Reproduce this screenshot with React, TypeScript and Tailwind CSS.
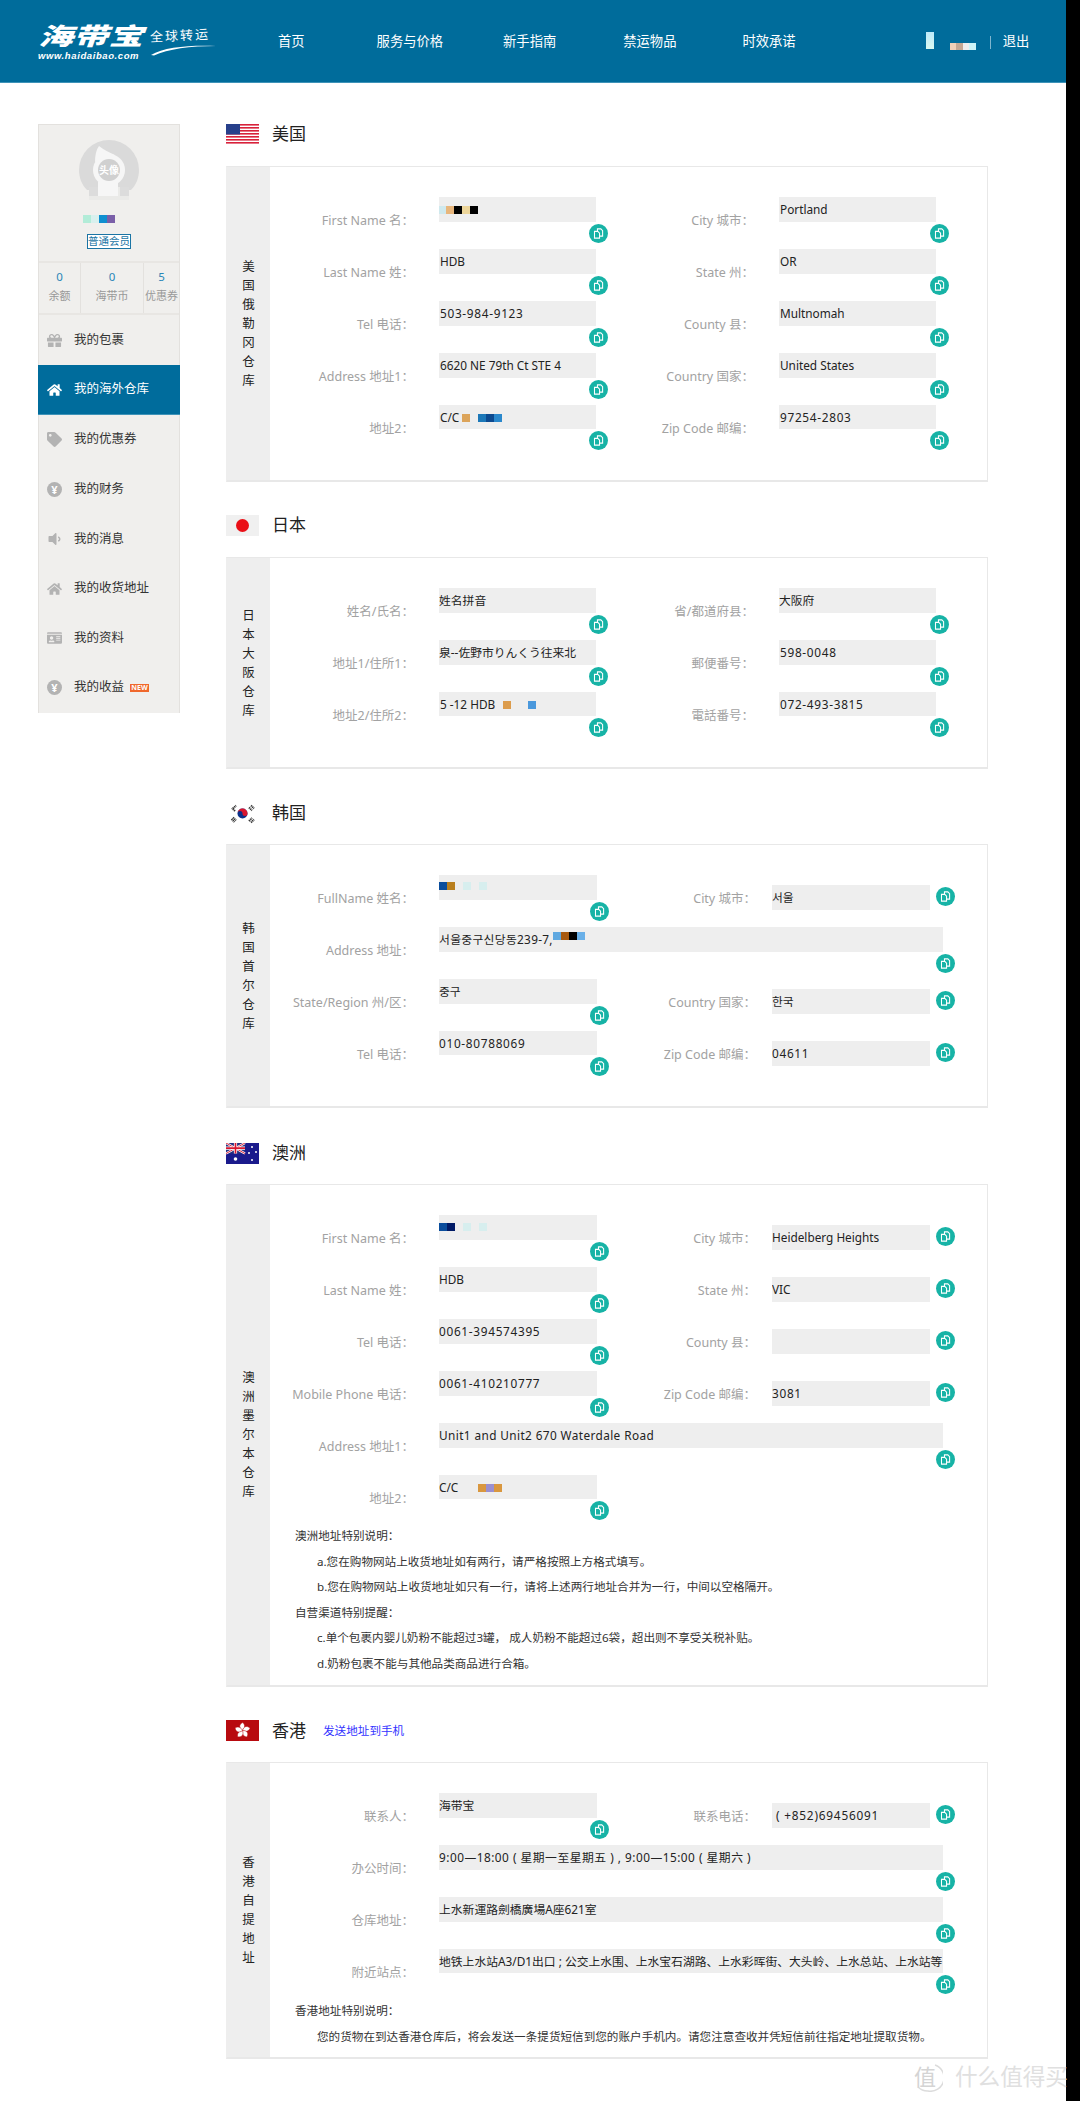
import React from "react";
import { FaGift, FaHome, FaTag, FaVolumeDown, FaIdCard } from "react-icons/fa";

const FONT = '"Noto Sans","Noto Sans CJK SC","Noto Sans CJK KR",sans-serif';

function CopyIcon() {
  return (
    <svg viewBox="0 0 18 18" className="w-[19px] h-[19px] block shrink-0">
      <circle cx="9" cy="9" r="9" fill="#17b3a6" />
      <path d="M8 4.6h3.2l1.7 1.7v5.2H8z" fill="none" stroke="#fff" strokeWidth="1" />
      <path d="M5.2 7h3.1l1.7 1.7v4.7H5.2z" fill="#17b3a6" stroke="#fff" strokeWidth="1" />
    </svg>
  );
}

function Mosaic({ colors, size = 8, className = "" }: { colors: string[]; size?: number; className?: string }) {
  return (
    <span className={"inline-flex shrink-0 " + className}>
      {colors.map((c, i) => (
        <span key={i} className="block" style={{ width: size, height: size, background: c }} />
      ))}
    </span>
  );
}

function Num({ children, ml = 0 }: { children: React.ReactNode; ml?: number }) {
  return (
    <span className="tracking-[.7px]" style={{ marginLeft: ml }}>
      {children}
    </span>
  );
}

type F = {
  label: string;
  value?: React.ReactNode;
  inline?: boolean;
  wide?: boolean;
};

function Field({ f, labelW, gap, inputW, colW }: { f: F; labelW: number; gap: number; inputW: number; colW: number }) {
  return (
    <div className="flex shrink-0">
      <div
        className="shrink-0 text-right text-[12.5px] leading-[18px] pt-[15px] text-[#a2a2a2] whitespace-nowrap"
        style={{ width: labelW + 6 }}
      >
        {f.label}
      </div>
      {f.inline ? (
        <div className="flex items-start" style={{ marginLeft: gap - 6 }}>
          <div
            className="mt-[10px] h-[25px] pt-[1px] bg-[#eeeeee] flex items-center text-[11.8px] text-[#222] whitespace-nowrap overflow-hidden"
            style={{ width: inputW }}
          >
            {f.value}
          </div>
          <div className="mt-[12px] ml-[6px]">
            <CopyIcon />
          </div>
        </div>
      ) : (
        <div className="flex flex-col items-end" style={{ marginLeft: gap - 6, width: colW }}>
          <div
            className="self-start h-[25px] pt-[1px] bg-[#eeeeee] flex items-center text-[11.8px] text-[#222] whitespace-nowrap overflow-hidden"
            style={{ width: inputW }}
          >
            {f.value}
          </div>
          <div className="mt-[2px]">
            <CopyIcon />
          </div>
        </div>
      )}
    </div>
  );
}

function Rows({ rows, variant }: { rows: F[][]; variant: "a" | "b" }) {
  return (
    <div className="flex flex-col">
      {rows.map((r, i) => (
        <div key={i} className={"flex " + (i === rows.length - 1 ? "h-[45px]" : "h-[52px]")}>
          {r.length === 1 && r[0].wide ? (
            <Field f={r[0]} labelW={138} gap={31} inputW={504} colW={516} />
          ) : (
            <>
              <Field f={r[0]} labelW={138} gap={31} inputW={variant === "a" ? 157 : 158} colW={variant === "a" ? 169 : 170} />
              {r[1] &&
                (variant === "a" ? (
                  <Field f={r[1]} labelW={140} gap={31} inputW={157} colW={170} />
                ) : (
                  <Field f={{ ...r[1], inline: true }} labelW={141} gap={22} inputW={158} colW={180} />
                ))}
            </>
          )}
        </div>
      ))}
    </div>
  );
}

function Side({ text }: { text: string }) {
  return (
    <div className="w-[43px] shrink-0 bg-[#eeeeee] flex flex-col items-center justify-center text-[12.5px] leading-[19px] text-[#222]">
      {text.split("").map((c, i) => (
        <span key={i} className="block">
          {c}
        </span>
      ))}
    </div>
  );
}

function Title({ flag, name, extra, mb = 21 }: { flag: React.ReactNode; name: string; extra?: React.ReactNode; mb?: number }) {
  return (
    <div className="flex items-center h-[20px]" style={{ marginBottom: mb }}>
      <div className="w-[33px] h-[21px] shrink-0">{flag}</div>
      <div className="ml-[13px] text-[17px] leading-[20px] text-[#222]">{name}</div>
      {extra}
    </div>
  );
}

function Panel({ side, children, pb = 30 }: { side: string; children: React.ReactNode; pb?: number }) {
  return (
    <div className="flex border border-[#e8e8e8] border-b-2 border-l-[#eeeeee]">
      <Side text={side} />
      <div className="flex-1 pt-[30px]" style={{ paddingBottom: pb }}>
        {children}
      </div>
    </div>
  );
}

function Notes({ items, mt }: { items: { t: string; sub?: boolean }[]; mt: number }) {
  return (
    <div className="text-[11.6px] leading-[25.6px] text-[#333] whitespace-nowrap" style={{ marginTop: mt }}>
      {items.map((n, i) => (
        <div key={i} className={n.sub ? "ml-[47px]" : "ml-[25px]"}>
          {n.t}
        </div>
      ))}
    </div>
  );
}

const FlagUS = (
  <svg viewBox="0 0 33 21" className="w-[33px] h-[21px] block">
    <rect width="33" height="21" fill="#fff" />
    {[0, 3, 6, 9, 12, 15, 18].map((y) => (
      <rect key={y} y={y} width="33" height="1.6" fill="#d8213a" />
    ))}
    <rect width="14" height="10.5" fill="#27408b" />
  </svg>
);
const FlagJP = (
  <div className="w-[33px] h-[21px] bg-[#f0f0f0] flex items-center justify-center">
    <div className="w-[13px] h-[13px] rounded-full bg-[#ea0f16]" />
  </div>
);
const FlagKR = (
  <svg viewBox="0 0 33 21" className="w-[33px] h-[21px] block">
    <rect width="33" height="21" fill="#fff" />
    <circle cx="16.5" cy="10.5" r="5" fill="#0a2f8a" />
    <path d="M11.5 10.5a5 5 0 0 1 10 0a2.5 2.5 0 0 1-5 0a2.5 2.5 0 0 0-5 0z" fill="#d8152f" />
    <g stroke="#333" strokeWidth="2" strokeDasharray="1.2 .6">
      <path d="M7 5.5l3-3M9 8l-3-3" />
      <path d="M23 2.5l3 3M25 0.5l3 3" transform="translate(0 2)" />
      <path d="M7 15.5l3 3M5.5 17l3 3" transform="translate(0 -1)" />
      <path d="M23 18.5l3-3M25 20l3-3" transform="translate(0 -.5)" />
    </g>
  </svg>
);
const FlagAU = (
  <svg viewBox="0 0 33 21" className="w-[33px] h-[21px] block">
    <rect width="33" height="21" fill="#1a1a8c" />
    <rect width="19" height="10.5" fill="#27307f" />
    <path d="M0 0l19 10.5M19 0L0 10.5" stroke="#fff" strokeWidth="2.2" />
    <path d="M0 0l19 10.5M19 0L0 10.5" stroke="#d8152f" strokeWidth=".9" />
    <path d="M9.5 0v10.5M0 5.2h19" stroke="#fff" strokeWidth="3.2" />
    <path d="M9.5 0v10.5M0 5.2h19" stroke="#d8152f" strokeWidth="1.7" />
    <circle cx="9.5" cy="16" r="1.8" fill="#fff" />
    <circle cx="26" cy="4" r="1" fill="#fff" />
    <circle cx="30" cy="9" r="1" fill="#fff" />
    <circle cx="23" cy="10" r="1" fill="#fff" />
    <circle cx="26" cy="17" r="1" fill="#fff" />
  </svg>
);
const FlagHK = (
  <svg viewBox="0 0 33 21" className="w-[33px] h-[21px] block">
    <rect width="33" height="21" fill="#b80a0f" />
    <g fill="#fff" stroke="#b80a0f" strokeWidth=".5">
      {[0, 72, 144, 216, 288].map((a) => (
        <path key={a} transform={`rotate(${a} 16.5 10.5)`} d="M16.5 10.5C12.6 8 13 4.2 16.8 2.6C19.4 5 19 8.4 16.5 10.5z" />
      ))}
    </g>
  </svg>
);

function Pix({ children }: { children: React.ReactNode }) {
  return <span className="flex items-center w-full h-full">{children}</span>;
}

const usRows: F[][] = [
  [
    { label: "First Name 名：", value: <Mosaic colors={["#cfe9ee", "#e8b67c", "#000", "#ecd59a", "#000"]} className="-ml-[1px]" /> },
    { label: "City 城市：", value: <span className="ml-[1px]">Portland</span> },
  ],
  [
    { label: "Last Name 姓：", value: <span className="ml-[1px]">HDB</span> },
    { label: "State 州：", value: <span className="ml-[1px]">OR</span> },
  ],
  [
    { label: "Tel 电话：", value: <Num ml={1}>503-984-9123</Num> },
    { label: "County 县：", value: <span className="ml-[1px]">Multnomah</span> },
  ],
  [
    { label: "Address 地址1：", value: <span className="ml-[1px]">6620 NE 79th Ct STE 4</span> },
    { label: "Country 国家：", value: <span className="ml-[1px]">United States</span> },
  ],
  [
    {
      label: "地址2：",
      value: (
        <Pix>
          <span className="ml-[1px]">C/C</span>
          <Mosaic colors={["#dca45a"]} className="ml-[3px]" />
          <Mosaic colors={["#1c78b8", "#0c4a90", "#2a88cc"]} className="ml-[8px]" />
        </Pix>
      ),
    },
    { label: "Zip Code 邮编：", value: <Num ml={1}>97254-2803</Num> },
  ],
];

const jpRows: F[][] = [
  [
    { label: "姓名/氏名：", value: "姓名拼音" },
    { label: "省/都道府县：", value: "大阪府" },
  ],
  [
    { label: "地址1/住所1：", value: "泉--佐野市りんくう往来北" },
    { label: "郵便番号：", value: <Num ml={1}>598-0048</Num> },
  ],
  [
    {
      label: "地址2/住所2：",
      value: (
        <Pix>
          <span className="ml-[1px]">5 -12 HDB</span>
          <Mosaic colors={["#dc9c4c"]} className="ml-[8px]" />
          <Mosaic colors={["#4a98dc"]} className="ml-[17px]" />
        </Pix>
      ),
    },
    { label: "電話番号：", value: <Num ml={1}>072-493-3815</Num> },
  ],
];

const krRows: F[][] = [
  [
    {
      label: "FullName 姓名：",
      value: <Mosaic colors={["#0a4d9c", "#b97f1e", "transparent", "#d7eeee", "transparent", "#d7eeee"]} className="-translate-y-[2px]" />,
    },
    { label: "City 城市：", value: "서울" },
  ],
  [
    {
      label: "Address 地址：",
      wide: true,
      value: (
        <Pix>
          <span className="tracking-[.3px]">서울중구신당동239-7,</span>
          <Mosaic colors={["#5fa8e0", "#a85a10", "#000", "#6ab0e8"]} className="-translate-y-[4px]" />
        </Pix>
      ),
    },
  ],
  [
    { label: "State/Region 州/区：", value: "중구" },
    { label: "Country 国家：", value: "한국" },
  ],
  [
    { label: "Tel 电话：", value: <Num>010-80788069</Num> },
    { label: "Zip Code 邮编：", value: <Num>04611</Num> },
  ],
];

const auRows: F[][] = [
  [
    {
      label: "First Name 名：",
      value: <Mosaic colors={["#0a4d9c", "#001a66", "transparent", "#d7eeee", "transparent", "#d7eeee"]} className="-translate-y-[1px]" />,
    },
    { label: "City 城市：", value: "Heidelberg Heights" },
  ],
  [
    { label: "Last Name 姓：", value: "HDB" },
    { label: "State 州：", value: "VIC" },
  ],
  [
    { label: "Tel 电话：", value: <Num>0061-394574395</Num> },
    { label: "County 县：", value: "" },
  ],
  [
    { label: "Mobile Phone 电话：", value: <Num>0061-410210777</Num> },
    { label: "Zip Code 邮编：", value: <Num>3081</Num> },
  ],
  [{ label: "Address 地址1：", wide: true, value: <span className="tracking-[.4px]">Unit1 and Unit2 670 Waterdale Road</span> }],
  [
    {
      label: "地址2：",
      value: (
        <Pix>
          <span>C/C</span>
          <Mosaic colors={["#d9973f", "#9a8fd0", "#d9973f"]} className="ml-[20px]" />
        </Pix>
      ),
    },
  ],
];

const hkRows: F[][] = [
  [
    { label: "联系人：", value: "海带宝" },
    { label: "联系电话：", value: <span className="ml-[4px] tracking-[.8px]">( +852)69456091</span> },
  ],
  [{ label: "办公时间：", wide: true, value: <span className="tracking-[.5px]">9:00—18:00 ( 星期一至星期五 ) , 9:00—15:00 ( 星期六 )</span> }],
  [{ label: "仓库地址：", wide: true, value: "上水新運路劍橋廣場A座621室" }],
  [{ label: "附近站点：", wide: true, value: "地铁上水站A3/D1出口 ; 公交上水围、上水宝石湖路、上水彩晖街、大头岭、上水总站、上水站等" }],
];

function Yen() {
  return (
    <span className="w-[15px] h-[15px] rounded-full bg-[#b3b3b3] text-white text-[11px] leading-[15px] text-center font-bold block">
      ¥
    </span>
  );
}

const menu: { t: string; i: React.ReactNode; h: string; active?: boolean; isNew?: boolean }[] = [
  { t: "我的包裹", i: <FaGift size={15} />, h: "h-[50px]" },
  { t: "我的海外仓库", i: <FaHome size={16} />, h: "h-[50px]", active: true },
  { t: "我的优惠券", i: <FaTag size={15} />, h: "h-[49.6px]" },
  { t: "我的财务", i: <Yen />, h: "h-[49.6px]" },
  { t: "我的消息", i: <FaVolumeDown size={16} />, h: "h-[49.6px]" },
  { t: "我的收货地址", i: <FaHome size={16} />, h: "h-[49.6px]" },
  { t: "我的资料", i: <FaIdCard size={16} />, h: "h-[49.6px]" },
  { t: "我的收益", i: <Yen />, h: "h-[49.6px]", isNew: true },
];

function Sidebar() {
  return (
    <aside className="w-[142px] ml-[38px] mt-[41px] shrink-0 self-start bg-[#f0efed] border-x border-[#e3e1de] border-t">
      <div className="h-[138px] flex flex-col items-center border-b-2 border-[#e8e6e3]">
        <div className="relative w-[62px] h-[60px] mt-[15px]">
          <svg viewBox="0 0 62 60" className="w-[62px] h-[60px] block">
            <path d="M1 30a30 30 0 0 1 60 0c0 8-3 15-8 20H9C4 45 1 38 1 30z" fill="#dadada" />
            <circle cx="31" cy="30" r="16" fill="#f6f6f6" />
            <path d="M21 6C26 10 31 12 37 15L17 22C17 16 18 10 21 6z" fill="#f6f6f6" />
            <rect x="11" y="47" width="40" height="13" fill="#eaeae8" />
            <rect x="11" y="47" width="9" height="9" fill="#dcdcdc" />
            <rect x="42" y="47" width="9" height="9" fill="#dcdcdc" />
            <rect x="20" y="42" width="20" height="14" fill="#f6f6f6" />
            <circle cx="31" cy="30" r="11" fill="#d0d0d0" />
          </svg>
          <span className="absolute left-0 right-0 top-[23px] text-center text-[10px] leading-[14px] font-bold text-white">头像</span>
        </div>
        <Mosaic colors={["#b2ecd8", "#d8f0ee", "#0f8fd0", "#7a5fa8"]} className="self-start ml-[44px] mt-[15px]" />
        <div className="mt-[11px] w-[44px] h-[15px] border border-[#1a74a4] text-[10.5px] leading-[13px] text-[#1a74a4] text-center bg-white whitespace-nowrap">
          普通会员
        </div>
      </div>
      <div className="flex h-[52px] border-b-2 border-[#e8e6e3] text-center">
        {[
          ["0", "余额", "w-[42px]"],
          ["0", "海带币", "w-[63px]"],
          ["5", "优惠券", "flex-1"],
        ].map(([n, l, w], i) => (
          <div key={i} className={w + " pt-[6px] " + (i < 2 ? "border-r border-[#e3e1de]" : "")}>
            <div className="text-[11.5px] leading-[16px] text-[#2a86b8]">{n}</div>
            <div className="mt-[3px] text-[11px] leading-[16px] text-[#999]">{l}</div>
          </div>
        ))}
      </div>
      <nav className="-mx-px">
        {menu.map((m, i) => (
          <div
            key={i}
            className={
              m.h +
              " flex items-center pl-[9px] text-[12.5px] " +
              (m.active ? "bg-[#006c9c] text-white border-b border-[#3e93b8]" : "text-[#333]")
            }
          >
            <span className={"w-[15px] flex justify-center shrink-0 " + (m.active ? "text-white" : "text-[#b3b3b3]")}>{m.i}</span>
            <span className="ml-[12px]">{m.t}</span>
            {m.isNew && (
              <span className="ml-[6px] w-[19px] h-[8px] bg-[#f0682c] text-white text-[7px] leading-[8px] font-bold text-center">NEW</span>
            )}
          </div>
        ))}
      </nav>
    </aside>
  );
}

function Header() {
  return (
    <header className="h-[83px] bg-[#006c9b] border-b border-[#3e93b8] relative text-white text-[13.3px] shrink-0">
      <div className="flex h-full items-center pl-[38px] pt-[2px]">
        <div className="w-[179px] h-[36px] shrink-0 flex items-start gap-[5px] -mt-[2px]">
          <div className="w-[107px] shrink-0" style={{ fontFamily: '"Liberation Sans","Noto Sans CJK SC",sans-serif' }}>
            <div className="text-[24px] leading-[27px] font-black italic whitespace-nowrap scale-x-[1.46] origin-left">海带宝</div>
            <div className="text-[9.5px] leading-[11px] font-bold italic tracking-[.6px] whitespace-nowrap">www.haidaibao.com</div>
          </div>
          <div className="relative mt-[5px] w-[67px]">
            <div className="text-[13px] leading-[15px] tracking-[2px] -rotate-3 whitespace-nowrap">全球转运</div>
            <svg viewBox="0 0 67 14" className="absolute left-0 top-[14px] w-[67px] h-[14px]">
              <path d="M1 13C14 5 40 3 66 4C40 4 18 7 4 13.5z" fill="#fff" />
            </svg>
          </div>
        </div>
        <nav className="flex items-center h-full">
          <span className="ml-[61px]">首页</span>
          <span className="ml-[72px]">服务与价格</span>
          <span className="ml-[60px]">新手指南</span>
          <span className="ml-[67px]">禁运物品</span>
          <span className="ml-[66px]">时效承诺</span>
        </nav>
        <div className="ml-[130px] flex items-center h-full relative">
          <span className="block w-[8px] h-[17px] bg-[linear-gradient(#bdeafa,#d8f8f0)] -mt-[4px]" />
          <span className="ml-[16px] mt-[7px]">
            <Mosaic colors={["#f0d0b8", "#c4a894", "#eeeeee", "#cdf4f8"]} size={6.5} className="h-[9px] [&>span]:h-[9px]" />
          </span>
          <span className="ml-[14px] w-px h-[13px] bg-[#7fb6cf]" />
          <span className="ml-[12px]">退出</span>
        </div>
      </div>
    </header>
  );
}

function Watermark() {
  return (
    <div className="absolute left-[913px] top-[2062px] flex items-center text-[#e0e0e0] whitespace-nowrap">
      <div className="relative w-[30px] h-[30px]">
        <svg viewBox="0 0 30 30" className="absolute inset-0">
          <path d="M22 3a13.5 13.5 0 0 1-7 26a13.5 13.5 0 0 1-10-4" fill="none" stroke="#dcdcdc" strokeWidth="1.5" />
        </svg>
        <span className="absolute left-[1px] top-0 text-[22px] leading-[28px] text-[#d4d4d4]">值</span>
      </div>
      <span className="ml-[12px] text-[22.6px] leading-[28px]">什么值得买</span>
    </div>
  );
}

export default function App() {
  return (
    <div className="relative w-[1080px] h-[2101px] flex bg-white overflow-hidden" style={{ fontFamily: FONT }}>
      <div className="w-[1066px] shrink-0 flex flex-col">
        <Header />
        <div className="flex">
          <Sidebar />
          <main className="ml-[46px] w-[762px] pt-[41px]">
            <section>
              <Title flag={FlagUS} name="美国" mb={22} />
              <Panel side="美国俄勒冈仓库">
                <Rows rows={usRows} variant="a" />
              </Panel>
            </section>
            <section className="mt-[33px]">
              <Title flag={FlagJP} name="日本" mb={22} />
              <Panel side="日本大阪仓库">
                <Rows rows={jpRows} variant="a" />
              </Panel>
            </section>
            <section className="mt-[34px]">
              <Title flag={FlagKR} name="韩国" />
              <Panel side="韩国首尔仓库">
                <Rows rows={krRows} variant="b" />
              </Panel>
            </section>
            <section className="mt-[35px]">
              <Title flag={FlagAU} name="澳洲" />
              <Panel side="澳洲墨尔本仓库" pb={8.4}>
                <Rows rows={auRows} variant="b" />
                <Notes
                  mt={3}
                  items={[
                    { t: "澳洲地址特别说明：" },
                    { t: "a.您在购物网站上收货地址如有两行，请严格按照上方格式填写。", sub: true },
                    { t: "b.您在购物网站上收货地址如只有一行，请将上述两行地址合并为一行，中间以空格隔开。", sub: true },
                    { t: "自营渠道特别提醒：" },
                    { t: "c.单个包裹内婴儿奶粉不能超过3罐， 成人奶粉不能超过6袋，超出则不享受关税补贴。", sub: true },
                    { t: "d.奶粉包裹不能与其他品类商品进行合箱。", sub: true },
                  ]}
                />
              </Panel>
            </section>
            <section className="mt-[34px]">
              <Title
                flag={FlagHK}
                name="香港"
                extra={<span className="ml-[17px] text-[11.6px] text-[#3333ff]">发送地址到手机</span>}
              />
              <Panel side="香港自提地址" pb={7.8}>
                <Rows rows={hkRows} variant="b" />
                <Notes
                  mt={4}
                  items={[
                    { t: "香港地址特别说明：" },
                    { t: "您的货物在到达香港仓库后，将会发送一条提货短信到您的账户手机内。请您注意查收并凭短信前往指定地址提取货物。", sub: true },
                  ]}
                />
              </Panel>
            </section>
          </main>
        </div>
      </div>
      <div className="w-[14px] shrink-0 bg-black" />
      <Watermark />
    </div>
  );
}
